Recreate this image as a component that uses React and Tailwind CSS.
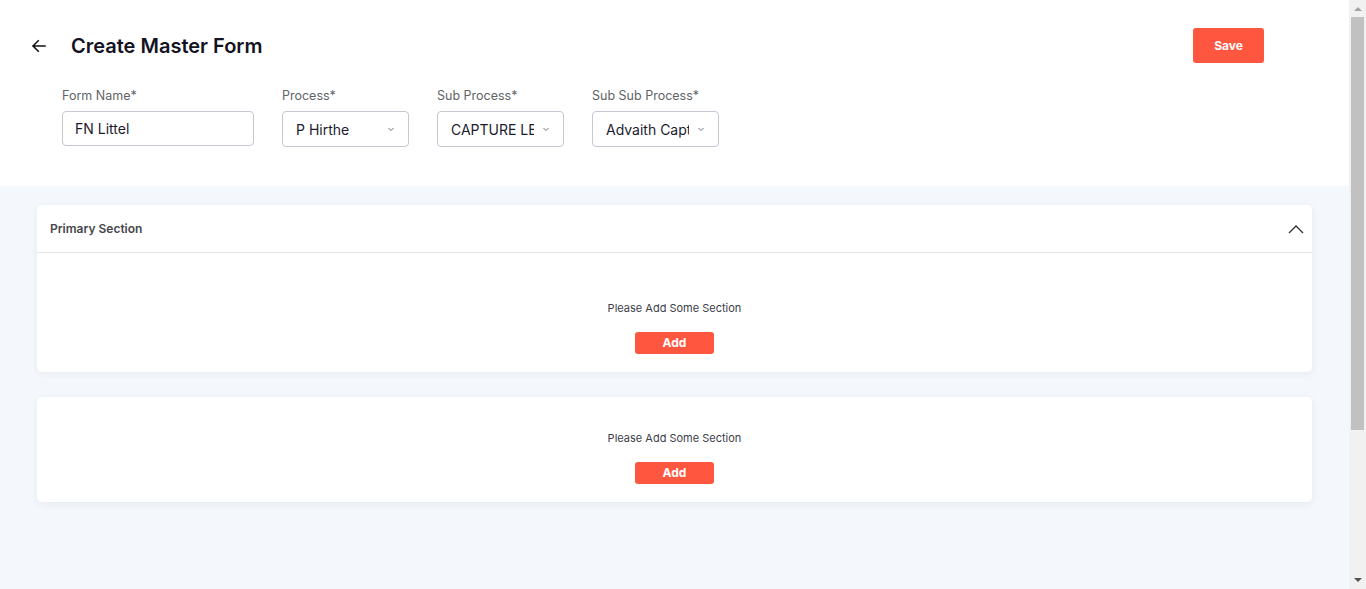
import React from "react";

function Chevron() {
  return (
    <svg width="8" height="8" viewBox="0 0 8 8" className="shrink-0">
      <path d="M1.5 3 L4 5.5 L6.5 3" fill="none" stroke="#6b7280" strokeWidth="1" />
    </svg>
  );
}

function Select({ label, value }) {
  return (
    <div className="flex flex-col">
      <label className="text-[12.5px] text-[#5f6368] leading-4 mb-[7px] mt-[1px]">{label}</label>
      <div className="w-[127px] h-[36px] border border-[#c3c8d3] rounded-[4px] flex items-center pl-[13px] pr-[13px] bg-white">
        <span className="flex-1 overflow-hidden whitespace-nowrap text-[14px] text-[#1b1b2f]">{value}</span>
        <span className="ml-2"><Chevron /></span>
      </div>
    </div>
  );
}

function Empty() {
  return (
    <div className="flex flex-col items-center">
      <p className="text-[11px] text-[#3c4049] leading-4">Please Add Some Section</p>
      <button className="mt-[16px] w-[79px] h-[22px] bg-[#ff5640] rounded-[3px] text-white text-[12px] font-bold">Add</button>
    </div>
  );
}

export default function App() {
  return (
    <div className="h-[589px] flex overflow-hidden" style={{ fontFamily: "Inter, 'Noto Sans', sans-serif" }}>
      <div className="flex-1 min-w-0 bg-[#f4f7fb] flex flex-col">
        <div className="bg-white h-[186px] pl-[29px] pr-[85px]">
          <div className="flex items-center justify-between pt-[28px]">
            <div className="flex items-center h-[35px]">
              <svg width="18" height="18" viewBox="0 0 24 24" className="ml-[1px]">
                <path d="M20 12H4M11 5l-7 7 7 7" fill="none" stroke="#111" strokeWidth="2" strokeLinecap="square" />
              </svg>
              <h1 className="ml-[23px] text-[20px] font-semibold text-[#131322]">Create Master Form</h1>
            </div>
            <button className="w-[71px] h-[35px] bg-[#ff5640] rounded-[3px] text-white text-[12px] font-bold">Save</button>
          </div>
          <div className="flex items-start gap-[28px] pl-[33px] mt-[24px]">
            <div className="flex flex-col">
              <label className="text-[12.5px] text-[#5f6368] leading-4 mb-[7px] mt-[1px]">Form Name*</label>
              <div className="w-[192px] h-[35px] border border-[#c3c8d3] rounded-[4px] flex items-center pl-[12px] text-[14px] text-[#1b1b2f] bg-white">FN Littel</div>
            </div>
            <Select label="Process*" value="P Hirthe" />
            <Select label="Sub Process*" value="CAPTURE LEAD" />
            <Select label="Sub Sub Process*" value="Advaith Capture" />
          </div>
        </div>
        <div className="px-[37px] pt-[19px] flex flex-col gap-[25px]">
          <div className="bg-white rounded-[5px] shadow-[0_2px_8px_rgba(40,60,100,0.06)]">
            <div className="h-[48px] flex items-center justify-between pl-[13px] pr-[8px] border-b border-[#e4e6ea]">
              <span className="text-[12px] font-semibold text-[#45464d]">Primary Section</span>
              <svg width="16" height="10" viewBox="0 0 16 10">
                <path d="M1 9 L8 2 L15 9" fill="none" stroke="#333" strokeWidth="1.3" />
              </svg>
            </div>
            <div className="pt-[47px] pb-[18px]">
              <Empty />
            </div>
          </div>
          <div className="bg-white rounded-[5px] shadow-[0_2px_8px_rgba(40,60,100,0.06)] pt-[33px] pb-[18px]">
            <Empty />
          </div>
        </div>
      </div>
      <div className="w-[17px] shrink-0 bg-[#f1f1f1] flex flex-col items-center">
        <div className="h-[17px] flex items-center justify-center">
          <svg width="8" height="5" viewBox="0 0 8 5"><path d="M0 5 L4 1 L8 5 Z" fill="#a3a3a3" /></svg>
        </div>
        <div className="w-[13px] h-[413px] bg-[#c1c1c1]" />
        <div className="flex-1" />
        <div className="h-[17px] flex items-center justify-center">
          <svg width="8" height="5" viewBox="0 0 8 5"><path d="M0 0 L8 0 L4 4 Z" fill="#505050" /></svg>
        </div>
      </div>
    </div>
  );
}
